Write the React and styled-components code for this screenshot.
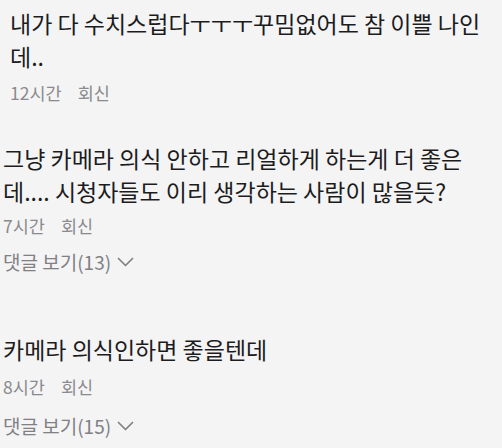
import styled, { createGlobalStyle } from 'styled-components';

const GlobalStyle = createGlobalStyle`
  html, body {
    margin: 0;
    padding: 0;
    background: #f4f4f4;
  }
  body {
    font-family: "Noto Sans CJK KR", "Noto Sans", sans-serif;
  }
`;

const Page = styled.div`
  width: 502px;
  height: 448px;
  overflow: hidden;
  background: #f4f4f4;
  display: flex;
  flex-direction: column;
`;

const Comment = styled.div`
  display: flex;
  flex-direction: column;
  align-items: flex-start;
  padding-left: ${(p) => p.$left}px;
  margin-top: ${(p) => p.$top}px;
`;

const Body = styled.p`
  margin: 0;
  font-size: 23px;
  line-height: 33px;
  color: #1c1c1e;
  white-space: pre;
  letter-spacing: 0;
`;

const Meta = styled.div`
  display: flex;
  gap: 16px;
  margin-top: ${(p) => p.$gap}px;
  font-size: 17.5px;
  line-height: 22px;
  color: #8a8a8f;
`;

const Replies = styled.div`
  display: flex;
  align-items: center;
  gap: 6px;
  margin-top: ${(p) => p.$gap}px;
  font-size: 19px;
  line-height: 24px;
  color: #808085;
`;

const Chevron = () => (
  <svg width="17" height="10" viewBox="0 0 17 10" fill="none">
    <polyline points="1.5,1.5 8.5,8.5 15.5,1.5" stroke="#808085" strokeWidth="1.7" strokeLinecap="round" strokeLinejoin="round" />
  </svg>
);

const comments = [
  {
    left: 10, top: 7, metaGap: 9,
    text: '내가 다 수치스럽다ㅜㅜㅜ꾸밈없어도 참 이쁠 나인\n데..',
    time: '12시간',
  },
  {
    left: 3, top: 38, metaGap: 7, replyGap: 13,
    text: '그냥 카메라 의식 안하고 리얼하게 하는게 더 좋은\n데.... 시청자들도 이리 생각하는 사람이 많을듯?',
    time: '7시간', replies: 13,
  },
  {
    left: 3, top: 59, metaGap: 10, replyGap: 16,
    text: '카메라 의식인하면 좋을텐데',
    time: '8시간', replies: 15,
  },
];

function App() {
  return (
    <Page>
      <GlobalStyle />
      {comments.map((c, i) => (
        <Comment key={i} $left={c.left} $top={c.top}>
          <Body>{c.text}</Body>
          <Meta $gap={c.metaGap}>
            <span>{c.time}</span>
            <span>회신</span>
          </Meta>
          {c.replies && (
            <Replies $gap={c.replyGap}>
              <span>댓글 보기({c.replies})</span>
              <Chevron />
            </Replies>
          )}
        </Comment>
      ))}
    </Page>
  );
}

export default App;
